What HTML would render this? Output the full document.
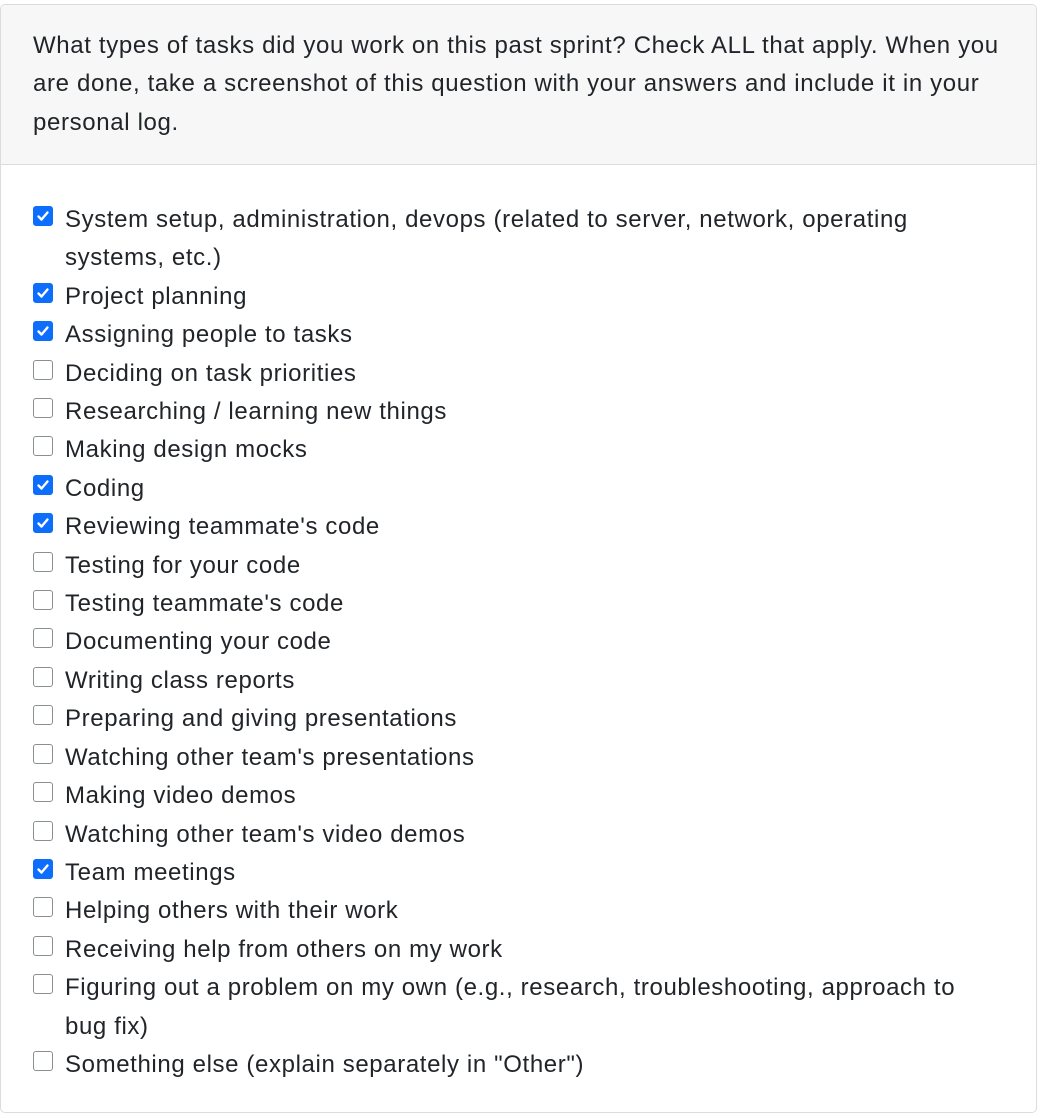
<!DOCTYPE html>
<html><head><style>
body{margin:0;background:#fff;font-family:"Liberation Sans",sans-serif;color:#212529;}
.card{position:absolute;left:0;top:4px;width:1035px;height:1107px;border:1px solid #dcdcdc;border-radius:5px;overflow:hidden;}
.hd{background:#f7f7f7;border-bottom:1px solid #dcdcdc;height:160px;box-sizing:border-box;padding:22px 32px 0 32px;font-size:24px;letter-spacing:0.65px;line-height:38.4px;white-space:nowrap;}
.bd{position:absolute;top:196px;left:32px;font-size:24px;letter-spacing:0.62px;line-height:38.4px;}
.r{position:relative;padding-left:32px;white-space:nowrap;}
.c{position:absolute;left:0;top:5px;width:18px;height:18px;border:1px solid #8a8f94;border-radius:3px;background:#fff;}
.c.k{background:#0d6efd;border-color:#0d6efd;}
.c.k svg{position:absolute;left:2px;top:2px}
</style></head><body>
<div class="card">
<div class="hd">What types of tasks did you work on this past sprint? Check ALL that apply. When you<br>are done, take a screenshot of this question with your answers and include it in your<br>personal log.</div>
<div class="bd">
<div class="r"><span class="c k"><svg width="14" height="14" viewBox="0 0 14 14"><path d="M2.5 7.5l3 3 6-7" stroke="#fff" stroke-width="2.4" fill="none" stroke-linecap="round" stroke-linejoin="round"/></svg></span>System setup, administration, devops (related to server, network, operating<br>systems, etc.)</div>
<div class="r"><span class="c k"><svg width="14" height="14" viewBox="0 0 14 14"><path d="M2.5 7.5l3 3 6-7" stroke="#fff" stroke-width="2.4" fill="none" stroke-linecap="round" stroke-linejoin="round"/></svg></span>Project planning</div>
<div class="r"><span class="c k"><svg width="14" height="14" viewBox="0 0 14 14"><path d="M2.5 7.5l3 3 6-7" stroke="#fff" stroke-width="2.4" fill="none" stroke-linecap="round" stroke-linejoin="round"/></svg></span>Assigning people to tasks</div>
<div class="r"><span class="c"></span>Deciding on task priorities</div>
<div class="r"><span class="c"></span>Researching / learning new things</div>
<div class="r"><span class="c"></span>Making design mocks</div>
<div class="r"><span class="c k"><svg width="14" height="14" viewBox="0 0 14 14"><path d="M2.5 7.5l3 3 6-7" stroke="#fff" stroke-width="2.4" fill="none" stroke-linecap="round" stroke-linejoin="round"/></svg></span>Coding</div>
<div class="r"><span class="c k"><svg width="14" height="14" viewBox="0 0 14 14"><path d="M2.5 7.5l3 3 6-7" stroke="#fff" stroke-width="2.4" fill="none" stroke-linecap="round" stroke-linejoin="round"/></svg></span>Reviewing teammate's code</div>
<div class="r"><span class="c"></span>Testing for your code</div>
<div class="r"><span class="c"></span>Testing teammate's code</div>
<div class="r"><span class="c"></span>Documenting your code</div>
<div class="r"><span class="c"></span>Writing class reports</div>
<div class="r"><span class="c"></span>Preparing and giving presentations</div>
<div class="r"><span class="c"></span>Watching other team's presentations</div>
<div class="r"><span class="c"></span>Making video demos</div>
<div class="r"><span class="c"></span>Watching other team's video demos</div>
<div class="r"><span class="c k"><svg width="14" height="14" viewBox="0 0 14 14"><path d="M2.5 7.5l3 3 6-7" stroke="#fff" stroke-width="2.4" fill="none" stroke-linecap="round" stroke-linejoin="round"/></svg></span>Team meetings</div>
<div class="r"><span class="c"></span>Helping others with their work</div>
<div class="r"><span class="c"></span>Receiving help from others on my work</div>
<div class="r"><span class="c"></span>Figuring out a problem on my own (e.g., research, troubleshooting, approach to<br>bug fix)</div>
<div class="r"><span class="c"></span>Something else (explain separately in "Other")</div>
</div>
</div>
</body></html>
